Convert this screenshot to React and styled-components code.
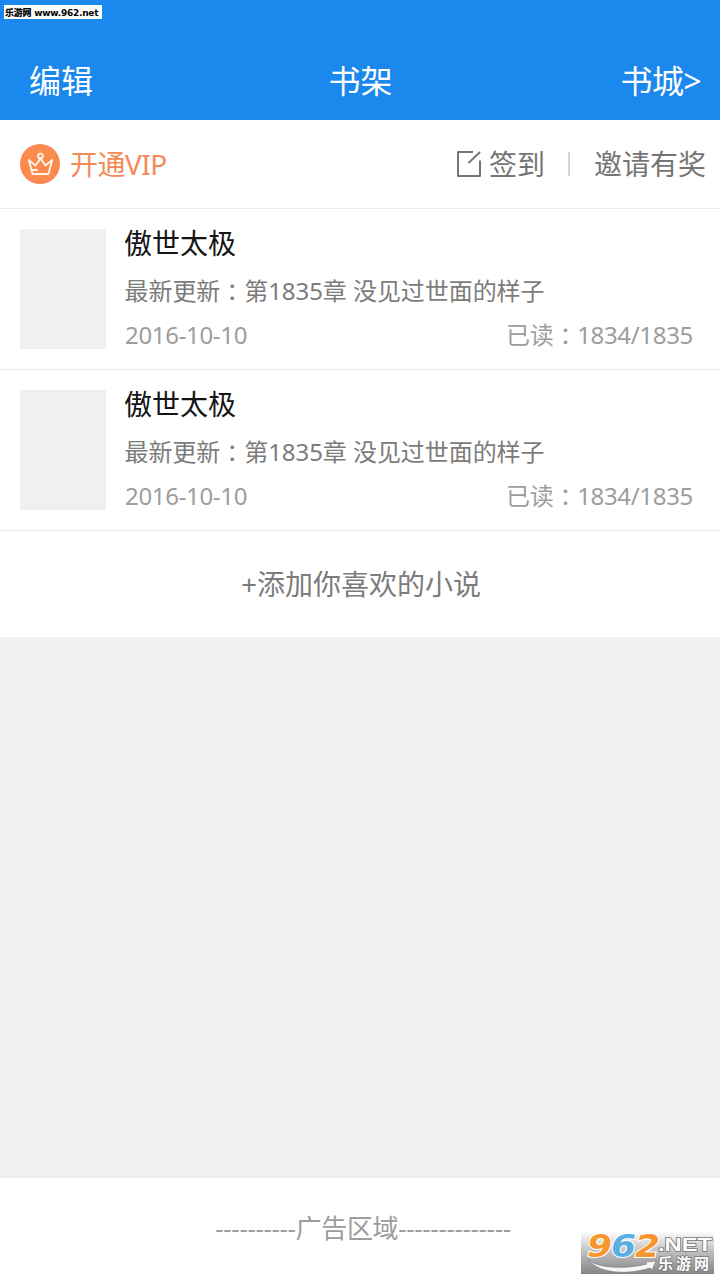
import styled, { createGlobalStyle } from "styled-components";

const books = [
  {
    id: 1,
    title: "傲世太极",
    chapter: "第1835章 没见过世面的样子",
    date: "2016-10-10",
    progress: "1834/1835",
  },
  {
    id: 2,
    title: "傲世太极",
    chapter: "第1835章 没见过世面的样子",
    date: "2016-10-10",
    progress: "1834/1835",
  },
];

const App = () => {
  return (
    <>
      <GlobalStyle />
      <Page>
        <Header>
          <HeaderLink>编辑</HeaderLink>
          <HeaderTitle>书架</HeaderTitle>
          <HeaderLink $end>书城&gt;</HeaderLink>
          <SiteTag>
            <b>乐游网</b> www.962.net
          </SiteTag>
        </Header>

        <Toolbar>
          <Vip>
            <CrownIcon />
            <span>开通VIP</span>
          </Vip>
          <Actions>
            <SignIcon />
            <span>签到</span>
            <Divider />
            <span>邀请有奖</span>
          </Actions>
        </Toolbar>

        {books.map((book) => (
          <Book book={book} key={book.id} />
        ))}

        <AddBook>+添加你喜欢的小说</AddBook>
        <Filler />

        <AdArea>
          <span>----------广告区域--------------</span>
          <Watermark />
        </AdArea>
      </Page>
    </>
  );
};

const GlobalStyle = createGlobalStyle`
  * {
    box-sizing: border-box;
  }

  body {
    margin: 0;
    background: #fff;
    font-family: "Noto Sans", "Noto Sans CJK SC", sans-serif;
  }
`;

const Page = styled.div`
  width: 720px;
  height: 1280px;
  display: flex;
  flex-direction: column;
  overflow: hidden;
  background: #fff;
`;

const Header = styled.header`
  position: relative;
  height: 120px;
  padding: 42px 19px 0 29px;
  display: grid;
  grid-template-columns: 1fr auto 1fr;
  background: #1b88ee;
  color: #fff;
  font-size: 32px;
  line-height: 78px;
`;

const HeaderLink = styled.span`
  text-align: ${({ $end }) => ($end ? "right" : "left")};
  letter-spacing: ${({ $end }) => ($end ? "-0.6px" : "0")};
`;

const HeaderTitle = styled.h1`
  margin: 0;
  padding-right: 9px;
  font-size: inherit;
  font-weight: 400;
`;

const SiteTag = styled.div`
  position: absolute;
  top: 5px;
  left: 4px;
  width: 98px;
  height: 14px;
  padding-left: 1px;
  background: #fff;
  color: #000;
  font: bold 9px/16px "DejaVu Sans", "Noto Sans CJK SC", sans-serif;
  letter-spacing: -0.25px;
  white-space: nowrap;
`;

const Toolbar = styled.div`
  height: 89px;
  padding: 0 14px 0 20px;
  display: flex;
  align-items: center;
  justify-content: space-between;
  border-bottom: 1px solid #ebebeb;
  font-size: 28px;
  line-height: 40px;
`;

const Vip = styled.div`
  display: flex;
  align-items: center;
  gap: 10px;
  color: #f38b57;
  letter-spacing: -0.5px;
`;

const Actions = styled.div`
  display: flex;
  align-items: center;
  color: #757575;

  svg {
    margin-right: 7px;
  }
`;

const Divider = styled.i`
  width: 2px;
  height: 24px;
  margin: 0 24px 0 23px;
  background: #d4d4d4;
`;

const BookRow = styled.article`
  height: 161px;
  padding: 20px 27px 20px 20px;
  display: flex;
  gap: 18px;
  border-bottom: 1px solid #ebebeb;
`;

const Cover = styled.div`
  width: 86px;
  height: 120px;
  background: #f0f0f0;
`;

const BookInfo = styled.div`
  flex: 1;
  font-size: 24px;
  white-space: nowrap;

  h2 {
    margin: -6px 0 0;
    color: #151515;
    font-size: 28px;
    font-weight: 400;
    line-height: 40px;
  }
`;

const Latest = styled.p`
  margin: 10px 0 0;
  padding-left: 0.5px;
  color: #7c7c7c;
  line-height: 36px;
  letter-spacing: -0.06px;
`;

const Meta = styled.div`
  margin-top: 8px;
  padding-left: 1px;
  display: flex;
  justify-content: space-between;
  color: #9d9d9d;
  line-height: 36px;
  letter-spacing: -0.32px;
`;

// full-width colon sits in the middle of its cell
const Colon = styled.span`
  position: relative;
  top: 1px;
  font-family: "Noto Sans CJK TC", sans-serif;
  line-height: 1;
`;

const AddBook = styled.div`
  height: 106px;
  padding-left: 2px;
  color: #7c7c7c;
  font-size: 28px;
  line-height: 106px;
  text-align: center;
`;

const Filler = styled.div`
  flex: 1;
  background: #f0f0f0;
`;

const AdArea = styled.footer`
  position: relative;
  height: 102px;
  padding-left: 6px;
  color: #9d9d9d;
  font-size: 26px;
  line-height: 100px;
  letter-spacing: -0.34px;
  text-align: center;
`;

const Mark = styled.svg`
  position: absolute;
  left: 581px;
  top: 41px;
`;

const CrownIcon = () => (
  <svg width="40" height="40" viewBox="0 0 40 40" fill="none">
    <circle cx="20" cy="20" r="20" fill="#fb8a4e" />
    <g stroke="#fff3e8" strokeWidth="1.9" strokeLinejoin="round" strokeLinecap="round">
      <circle cx="20.5" cy="12" r="2.4" />
      <path d="M20.5 14.5 L15.5 21.5 L8.8 16 L12.6 30 H28.4 L32.2 16 L25.5 21.5 Z" />
      <path d="M12.5 26 H17" />
    </g>
  </svg>
);

const SignIcon = () => (
  <svg width="26" height="28" viewBox="0 0 26 28" fill="none" stroke="#757575" strokeWidth="2">
    <path d="M17 2 H2 V26 H24 V10.5" strokeLinejoin="round" />
    <path d="M12.5 13 L24 2" />
  </svg>
);

const Watermark = () => (
  <Mark width="139" height="61" viewBox="0 -12 139 61">
    <defs>
      <linearGradient id="fade" x1="0" y1="0" x2="0" y2="1">
        <stop offset="0" stopColor="#fff" />
        <stop offset="0.5" stopColor="#bdbdbd" />
        <stop offset="1" stopColor="#858585" />
      </linearGradient>
    </defs>
    <rect width="133" height="43" fill="url(#fade)" />
    <path
      d="M7 29 C19 38 46 38 66 33 L64 31 L75 30 L71 39 L69 37 C46 44 20 43 7 29 Z"
      fill="#f6f6f6"
      stroke="#777"
      strokeWidth="0.6"
    />
    <g fontWeight="700" strokeWidth="2" paintOrder="stroke" letterSpacing="0">
      <g fontFamily="DejaVu Sans, sans-serif" fontSize="32" fontStyle="italic" stroke="#fff">
        <text x="6" y="26" textLength="25" lengthAdjust="spacingAndGlyphs" fill="#f7962d">9</text>
        <text x="30" y="26" textLength="25" lengthAdjust="spacingAndGlyphs" fill="#5aaee3">6</text>
        <text x="54" y="26" textLength="25" lengthAdjust="spacingAndGlyphs" fill="#f7962d">2</text>
      </g>
      <g fill="#fff" stroke="#777" strokeWidth="1.4">
        <text
          x="77"
          y="20"
          fontFamily="Liberation Sans, sans-serif"
          fontSize="18"
          textLength="54"
          lengthAdjust="spacingAndGlyphs"
        >
          .NET
        </text>
        <text x="77" y="38" fontSize="15" fontFamily="Noto Sans CJK SC, sans-serif" textLength="51">
          乐游网
        </text>
      </g>
    </g>
  </Mark>
);

const Book = ({ book }) => {
  return (
    <BookRow>
      <Cover />
      <BookInfo>
        <h2>{book.title}</h2>
        <Latest>
          最新更新<Colon>：</Colon>
          {book.chapter}
        </Latest>
        <Meta>
          <span>{book.date}</span>
          <span>
            已读<Colon>：</Colon>
            {book.progress}
          </span>
        </Meta>
      </BookInfo>
    </BookRow>
  );
};

export default App;
